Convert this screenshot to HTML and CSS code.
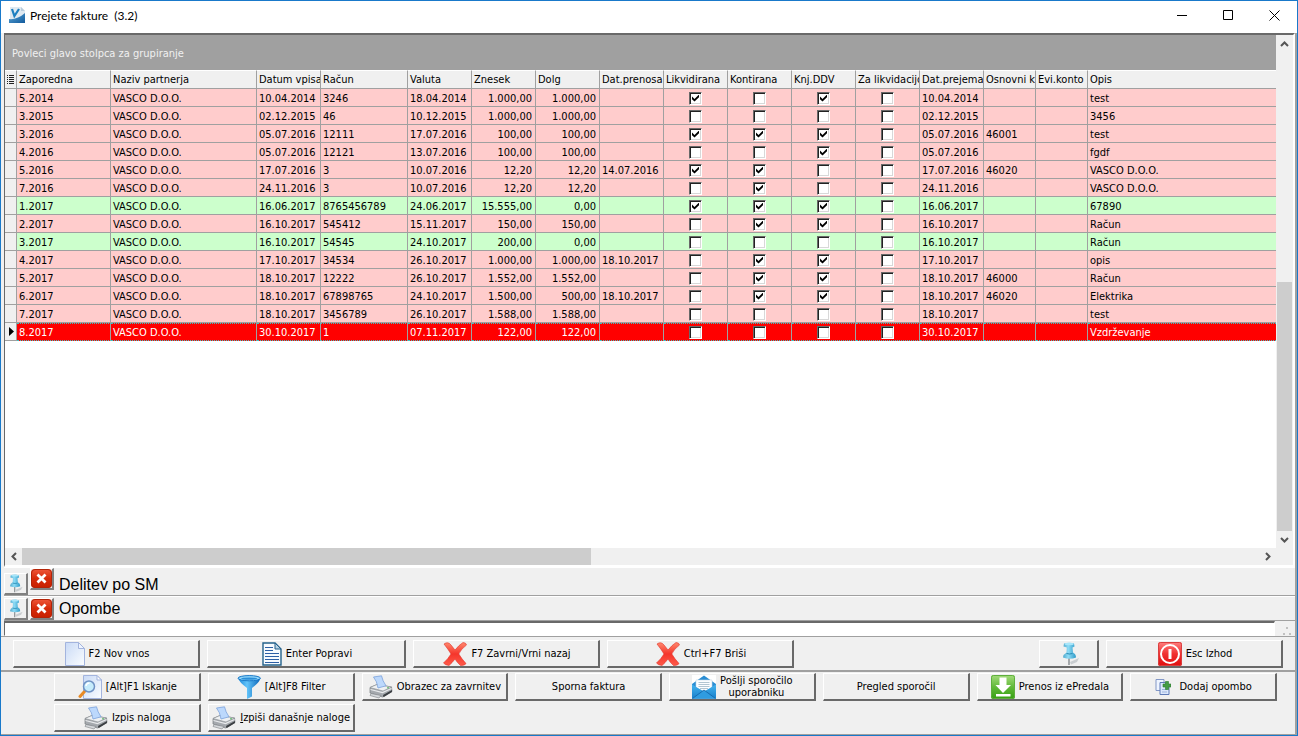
FILE: index.html
```html
<!DOCTYPE html>
<html lang="sl">
<head>
<meta charset="utf-8">
<title>Prejete fakture (3.2)</title>
<link rel="stylesheet" href="styles.css">
</head>
<body>
<svg class="sprite" aria-hidden="true">
  <defs>
    <linearGradient id="g-logo" x1="0" y1="0" x2="1" y2="1"><stop offset="0" stop-color="#5aa6d8"/><stop offset="1" stop-color="#125a9c"/></linearGradient>
    <linearGradient id="g-paper" x1="0" y1="0" x2="1" y2="1"><stop offset="0" stop-color="#c9daf6"/><stop offset="1" stop-color="#fbfdff"/></linearGradient>
    <linearGradient id="g-red" x1="0" y1="0" x2="0" y2="1"><stop offset="0" stop-color="#ff8a70"/><stop offset=".5" stop-color="#f5352b"/><stop offset="1" stop-color="#ff5a4a"/></linearGradient>
    <linearGradient id="g-close" x1="0" y1="0" x2="0" y2="1"><stop offset="0" stop-color="#f0583a"/><stop offset=".5" stop-color="#d62b0a"/><stop offset="1" stop-color="#c82000"/></linearGradient>
    <linearGradient id="g-power" x1="0" y1="0" x2="0" y2="1"><stop offset="0" stop-color="#ff8080"/><stop offset=".5" stop-color="#f03030"/><stop offset="1" stop-color="#e00e0e"/></linearGradient>
    <linearGradient id="g-green" x1="0" y1="0" x2="0" y2="1"><stop offset="0" stop-color="#a4dc7c"/><stop offset=".5" stop-color="#62b93a"/><stop offset="1" stop-color="#35a012"/></linearGradient>
    <linearGradient id="g-funnel" x1="0" y1="0" x2="1" y2="0"><stop offset="0" stop-color="#1b86d8"/><stop offset=".4" stop-color="#62c4fa"/><stop offset="1" stop-color="#0b65b8"/></linearGradient>
    <linearGradient id="g-pin" x1="0" y1="0" x2="1" y2="0"><stop offset="0" stop-color="#4fa8cc"/><stop offset=".4" stop-color="#8fdcf6"/><stop offset="1" stop-color="#2f9bc8"/></linearGradient>
    <linearGradient id="g-mail" x1="0" y1="0" x2="0" y2="1"><stop offset="0" stop-color="#45b4ee"/><stop offset="1" stop-color="#1880cc"/></linearGradient>
  </defs>
  <symbol id="i-logo" viewBox="0 0 16 16">
    <path d="M1 0h11l4 4v12H1z" fill="#dfe9f1"/><path d="M12 0v4h4z" fill="#b8ccdc"/>
    <path d="M0 12q8 1 16-6v10H0z" fill="url(#g-logo)"/>
    <path d="M3 2l2.400 7L10 2" fill="none" stroke="#1d7fc0" stroke-width="2.200"/>
  </symbol>
  <symbol id="i-blank" viewBox="0 0 20 24">
    <path d="M.5.5h13l6 6v17H.5z" fill="url(#g-paper)" stroke="#a3b4de"/><path d="M13.500.5v6h6z" fill="#eef4ff" stroke="#a3b4de"/>
  </symbol>
  <symbol id="i-text" viewBox="0 0 20 24">
    <path d="M1 1h12l6 6v16H1z" fill="#f6fafe" stroke="#23618b" stroke-width="1.400"/><path d="M13 1v6h6z" fill="#b9d3e4" stroke="#23618b"/>
    <path d="M3 5.500h8M3 8.500h8M3 11.500h14M3 14.500h14M3 17.500h14M3 20.500h14" stroke="#2c5fa5"/>
  </symbol>
  <symbol id="i-cross" viewBox="0 0 24 24">
    <path d="M1 2q4-3 7 1l4 5Q16 3 20 .5q3 0 3.500 2.500Q18 7 15.800 12q3 5 7.200 9.500-1 2-5.500 2-3.500-3-5.500-6.500-3 4-6 6.500Q2 23 .5 21 5 17 8 12 5 7 1 2z" fill="url(#g-red)" stroke="#e23328" stroke-width=".6"/>
  </symbol>
  <symbol id="i-search" viewBox="0 0 24 24">
    <path d="M5.500.5H19l4.500 4.500v18.500h-18z" fill="url(#g-paper)" stroke="#a3b4de"/><path d="M19 .5V5h4.500z" fill="#fff" stroke="#a3b4de"/>
    <path d="M6.500 16.500L2 21.500" stroke="#e88a24" stroke-width="3" stroke-linecap="round"/>
    <circle cx="11" cy="11.500" r="5.500" fill="#c6ecfc" stroke="#6f92c4" stroke-width="1.500"/><path d="M8 11q.5-3 3.500-3" fill="none" stroke="#fff" stroke-width="1.500"/>
  </symbol>
  <symbol id="i-funnel" viewBox="0 0 24 24">
    <path d="M1 3q1 4 9 10v11l5-2.500V13q8-6 8.500-10z" fill="url(#g-funnel)"/>
    <ellipse cx="12.200" cy="3.200" rx="11.200" ry="2.600" fill="#90d6fb" stroke="#1676c6"/><ellipse cx="12.200" cy="3.600" rx="8.200" ry="1.200" fill="#2b8fd8"/>
  </symbol>
  <symbol id="i-print" viewBox="0 0 24 24">
    <path d="M1 12.500l7-3 14.500 2.500.5 4.500-9.500 5.500L1 18z" fill="#a5a9ae" stroke="#777b80" stroke-width=".7"/>
    <path d="M1 12.500l7-3 14.500 2.500-8.500 4z" fill="#eef0f2" stroke="#8b9095" stroke-width=".6"/>
    <path d="M4.500 2L12.500.8q1 5 4.500 10l-8 2.200Q8 6 4.500 2z" fill="#bcd8fc" stroke="#7ba2dc" stroke-width=".8"/>
    <path d="M1.500 14.500l12 3 9-4" fill="none" stroke="#e9ebed" stroke-width="1.200"/>
    <path d="M14 20l9-5v2l-8.500 5.200z" fill="#3c4044"/><path d="M2 18.500l10 2-2 2.500-9-2.500z" fill="#d6d9dc" stroke="#7c8085" stroke-width=".6"/><circle cx="19" cy="12.800" r=".8" fill="#3fae46"/>
  </symbol>
  <symbol id="i-mail" viewBox="0 0 24 24">
    <path d="M0 0h24v24H0z" fill="#fff"/><path d="M0 9l12-8.500L24 9v14.500H0z" fill="#2b8ed4"/>
    <path d="M4 5h16v13H4z" fill="#fcfeff" stroke="#c4d8e6" stroke-width=".6"/><path d="M6.500 7.500h11M6.500 9.500h11M6.500 11.500h11M8 13.500h8" stroke="#a9bfcd" stroke-width=".9"/>
    <path d="M0 9.500l12 7 12-7v14H0z" fill="url(#g-mail)"/>
    <path d="M0 23.500L12 15l12 8.500z" fill="#2f9ce0"/><path d="M.5 23.500L12 15l11.500 8.500" fill="none" stroke="#1261a4" stroke-width=".8"/>
  </symbol>
  <symbol id="i-download" viewBox="0 0 24 24">
    <rect width="24" height="24" rx="2" fill="url(#g-green)"/><rect x=".5" y=".5" width="23" height="23" rx="2" fill="none" stroke="#5fae3e"/>
    <path d="M8.500 2.500h7V10H20l-8 8-7.500-8h4z" fill="#fff"/><path d="M5 19h14.500v2.500H5z" fill="#fff"/>
  </symbol>
  <symbol id="i-power" viewBox="0 0 24 24">
    <rect width="24" height="24" rx="2" fill="url(#g-power)"/><rect x=".5" y=".5" width="23" height="23" rx="2" fill="none" stroke="#d94040"/>
    <circle cx="12" cy="12" r="9" fill="none" stroke="#fff" stroke-width="2"/><path d="M12 7v10" stroke="#fff" stroke-width="3"/>
  </symbol>
  <symbol id="i-note" viewBox="0 0 16 16">
    <path d="M1 .5h8v11H1z" fill="#eef4ff" stroke="#8297c6"/><path d="M5 3.500h5l4 3.500v8.500H5z" fill="#dce8fc" stroke="#5f7bb8"/>
    <path d="M7 10.500h5M7 13h5" stroke="#9fb5de"/><path d="M10.500 2.500h3V5H16v3h-2.500v2.500h-3V8H8V5h2.500z" fill="#459c45" stroke="#2b7a30" stroke-width=".6"/>
  </symbol>
  <symbol id="i-pin" viewBox="0 0 20 24">
    <path d="M10 20l9-4-2 4-6 2.500z" fill="#c9cdd0"/><path d="M9 16v7" stroke="#84898d" stroke-width="1.400"/>
    <path d="M4 1.500Q9 0 14 1.500l.5 3-2 1 .5 5q3 1.500 3 5-6 2.500-13 0 .5-3.500 3.500-5l.3-5L3.500 4.500z" fill="url(#g-pin)"/>
    <ellipse cx="9.200" cy="2" rx="4.600" ry="1.200" fill="#a8e6fa"/><path d="M6.500 11.500q3 1 6 0" fill="none" stroke="#278ab4"/>
  </symbol>
  <symbol id="i-close" viewBox="0 0 21 19">
    <rect width="21" height="19" rx="4" fill="url(#g-close)"/><rect x=".5" y=".5" width="20" height="18" rx="3.500" fill="none" stroke="#b22408"/>
    <path d="M6.500 5.500l8 8m0-8l-8 8" stroke="#fff" stroke-width="2.800"/>
  </symbol>
</svg>

<div class="window">
  <header class="titlebar">
    <svg class="logo"><use href="#i-logo"/></svg>
    <h1 class="title">Prejete fakture&nbsp; (3.2)</h1>
    <button class="win-button" aria-label="Minimiraj"><svg viewBox="0 0 11 11"><path d="M0 5.500h10"/></svg></button>
    <button class="win-button" aria-label="Maksimiraj"><svg viewBox="0 0 11 11"><path d="M.5.5h9v9h-9z"/></svg></button>
    <button class="win-button" aria-label="Zapri"><svg viewBox="0 0 11 11"><path d="M.5.5l10 10m0-10l-10 10"/></svg></button>
  </header>

  <main class="content">
    <section class="grid">
      <div class="grid-view">
        <div class="group-box">Povleci glavo stolpca za grupiranje</div>
        <table class="invoices">
          <colgroup>
            <col class="c-mark"><col class="c-no"><col class="c-partner"><col class="c-std"><col class="c-bill">
            <col class="c-std"><col class="c-std"><col class="c-std"><col class="c-std"><col class="c-std"><col class="c-std"><col class="c-std"><col class="c-std"><col class="c-std">
            <col class="c-small"><col class="c-small"><col>
          </colgroup>
          <thead>
            <tr>
              <th aria-label="Stolpci"><svg class="columns-icon" viewBox="0 0 7 9"><path d="M0 .5h1M2 .5h5M0 2.500h1M2 2.500h5M0 4.500h1M2 4.500h5M0 6.500h1M2 6.500h5M0 8.500h1M2 8.500h5"/></svg></th>
              <th>Zaporedna</th><th>Naziv partnerja</th><th>Datum vpisa</th><th>Račun</th><th>Valuta</th><th>Znesek</th><th>Dolg</th><th>Dat.prenosa</th><th>Likvidirana</th><th>Kontirana</th><th>Knj.DDV</th><th>Za likvidacijo</th><th>Dat.prejema</th><th>Osnovni k</th><th>Evi.konto</th><th>Opis</th>
            </tr>
          </thead>
          <tbody id="rows"></tbody>
        </table>
      </div>
      <div class="scroll-v">
        <button class="scroll-button" aria-label="Gor"><svg viewBox="0 0 9 6"><path d="M1 5l3.500-3.500L8 5"/></svg></button>
        <div class="track-v"><div class="thumb-v"></div></div>
        <button class="scroll-button" aria-label="Dol"><svg viewBox="0 0 9 6"><path d="M1 1l3.500 3.500L8 1"/></svg></button>
      </div>
      <div class="scroll-h">
        <button class="scroll-button" aria-label="Levo"><svg class="side" viewBox="0 0 6 9"><path d="M5 1L1.500 4.500 5 8"/></svg></button>
        <div class="track-h"><div class="thumb-h"></div></div>
        <button class="scroll-button" aria-label="Desno"><svg class="side" viewBox="0 0 6 9"><path d="M1 1l3.500 3.500L1 8"/></svg></button>
      </div>
      <div class="scroll-corner"></div>
    </section>

    <section class="panel panel-tall">
      <button class="tool tool-low" aria-label="Pripni"><svg class="pin-small"><use href="#i-pin"/></svg></button>
      <button class="tool tool-high" aria-label="Zapri Delitev po SM"><svg class="close-icon"><use href="#i-close"/></svg></button>
      <h2 class="panel-title">Delitev po SM</h2>
    </section>
    <section class="panel">
      <button class="tool" aria-label="Pripni"><svg class="pin-small"><use href="#i-pin"/></svg></button>
      <button class="tool" aria-label="Zapri Opombe"><svg class="close-icon"><use href="#i-close"/></svg></button>
      <h2 class="panel-title">Opombe</h2>
    </section>
    <div class="note-row">
      <input class="note" type="text" aria-label="Opombe">
      <svg class="grip" viewBox="0 0 9 9"><path d="M4 0h2v2H4zM1 6h2v2H1zM7 6h2v2H7z"/></svg>
    </div>
  </main>

  <nav class="bar bar-main">
    <button class="btn"><svg class="icon-doc"><use href="#i-blank"/></svg>F2 Nov vnos</button>
    <button class="btn btn-wide"><svg class="icon-doc"><use href="#i-text"/></svg>Enter Popravi</button>
    <button class="btn"><svg class="icon"><use href="#i-cross"/></svg>F7 Zavrni/Vrni nazaj</button>
    <button class="btn"><svg class="icon"><use href="#i-cross"/></svg>Ctrl+F7 Briši</button>
    <button class="btn btn-pin" aria-label="Pripni"><svg class="icon-doc"><use href="#i-pin"/></svg></button>
    <button class="btn btn-exit"><svg class="icon"><use href="#i-power"/></svg>Esc Izhod</button>
  </nav>
  <nav class="bar bar-extra">
    <button class="btn"><svg class="icon"><use href="#i-search"/></svg>[Alt]F1 Iskanje</button>
    <button class="btn"><svg class="icon"><use href="#i-funnel"/></svg>[Alt]F8 Filter</button>
    <button class="btn"><svg class="icon"><use href="#i-print"/></svg>Obrazec za zavrnitev</button>
    <button class="btn">Sporna faktura</button>
    <button class="btn"><svg class="icon"><use href="#i-mail"/></svg><span>Pošlji sporočilo<br>uporabniku</span></button>
    <button class="btn">Pregled sporočil</button>
    <button class="btn"><svg class="icon"><use href="#i-download"/></svg>Prenos iz ePredala</button>
    <button class="btn btn-spaced"><svg class="icon-small"><use href="#i-note"/></svg>Dodaj opombo</button>
    <button class="btn"><svg class="icon"><use href="#i-print"/></svg>Izpis naloga</button>
    <button class="btn"><svg class="icon"><use href="#i-print"/></svg><span><u>I</u>zpiši današnje naloge</span></button>
  </nav>
</div>
<script src="rows.js"></script>
</body>
</html>
```
FILE: rows.js
```js
// number, entered, bill, due, amount, debt, transferred, flags, received, account, description, state
const invoices = [
  ["5.2014", "10.04.2014", "3246", "18.04.2014", "1.000,00", "1.000,00", "", "1010", "10.04.2014", "", "test", ""],
  ["3.2015", "02.12.2015", "46", "10.12.2015", "1.000,00", "1.000,00", "", "0000", "02.12.2015", "", "3456", ""],
  ["3.2016", "05.07.2016", "12111", "17.07.2016", "100,00", "100,00", "", "1110", "05.07.2016", "46001", "test", ""],
  ["4.2016", "05.07.2016", "12121", "13.07.2016", "100,00", "100,00", "", "0010", "05.07.2016", "", "fgdf", ""],
  ["5.2016", "17.07.2016", "3", "10.07.2016", "12,20", "12,20", "14.07.2016", "1100", "17.07.2016", "46020", "VASCO D.O.O.", ""],
  ["7.2016", "24.11.2016", "3", "10.07.2016", "12,20", "12,20", "", "0100", "24.11.2016", "", "VASCO D.O.O.", ""],
  ["1.2017", "16.06.2017", "8765456789", "24.06.2017", "15.555,00", "0,00", "", "1110", "16.06.2017", "", "67890", "paid"],
  ["2.2017", "16.10.2017", "545412", "15.11.2017", "150,00", "150,00", "", "0110", "16.10.2017", "", "Račun", ""],
  ["3.2017", "16.10.2017", "54545", "24.10.2017", "200,00", "0,00", "", "0000", "16.10.2017", "", "Račun", "paid"],
  ["4.2017", "17.10.2017", "34534", "26.10.2017", "1.000,00", "1.000,00", "18.10.2017", "0110", "17.10.2017", "", "opis", ""],
  ["5.2017", "18.10.2017", "12222", "26.10.2017", "1.552,00", "1.552,00", "", "0110", "18.10.2017", "46000", "Račun", ""],
  ["6.2017", "18.10.2017", "67898765", "24.10.2017", "1.500,00", "500,00", "18.10.2017", "0110", "18.10.2017", "46020", "Elektrika", ""],
  ["7.2017", "18.10.2017", "3456789", "26.10.2017", "1.588,00", "1.588,00", "", "0000", "18.10.2017", "", "test", ""],
  ["8.2017", "30.10.2017", "1", "07.11.2017", "122,00", "122,00", "", "0000", "30.10.2017", "", "Vzdrževanje", "selected"]
];
const flagNames = ["Likvidirana", "Kontirana", "Knj.DDV", "Za likvidacijo"];

const cell = (text, cls) => `<td${cls ? ` class="${cls}"` : ""}>${text}</td>`;

document.getElementById("rows").innerHTML = invoices.map(
  ([no, entered, bill, due, amount, debt, moved, flags, received, account, text, state]) => {
    const checks = [...flags].map((f, i) =>
      cell(`<input type="checkbox" class="check" aria-label="${flagNames[i]} ${no}"${f === "1" ? " checked" : ""}>`, "flag"));
    const marker = state === "selected" ? '<span class="marker"></span>' : "";
    return `<tr class="${state}">` + [
      cell(marker, "mark"), cell(no), cell("VASCO D.O.O."), cell(entered), cell(bill), cell(due),
      cell(amount, "num"), cell(debt, "num"), cell(moved), ...checks,
      cell(received), cell(account), cell(""), cell(text)
    ].join("") + "</tr>";
  }).join("");
```
FILE: styles.css
```css
* { box-sizing: border-box; }

body {
  margin: 0;
  background: #f0f0f0;
  color: #000;
  font-family: "DejaVu Sans Condensed", "Noto Sans", sans-serif;
  font-size: 11px;
  line-height: 13px;
}

button { font: inherit; color: inherit; margin: 0; padding: 0; border: 0; background: none; }
svg { display: block; flex: none; }
.sprite { position: absolute; width: 0; height: 0; }

.window {
  display: flex;
  flex-direction: column;
  min-height: 100vh;
  border: 1px solid #1979ca;
}

/* Title bar */
.titlebar {
  display: flex;
  align-items: center;
  height: 32px;
  padding-left: 8px;
  padding-bottom: 4px;
  background: #fff;
}
.logo { width: 16px; height: 16px; }
.title {
  flex: 1;
  margin: 0 0 0 5px;
  padding-top: 2px;
  font: 12px/16px Lato, "Open Sans", sans-serif;
}
.win-button {
  display: flex;
  align-items: center;
  justify-content: center;
  width: 46px;
  height: 28px;
}
.win-button svg { width: 11px; height: 11px; }
.win-button path { fill: none; stroke: #000; }

/* Grid */
.content {
  flex: 1;
  display: flex;
  flex-direction: column;
  padding-left: 3px;
  border-right: 2px solid #a0a0a0;
}
.grid {
  flex: 1;
  display: grid;
  grid-template-columns: 1fr 17px;
  grid-template-rows: 1fr 17px;
  border: 2px solid #696969;
  border-left-width: 1px;
  border-right: 2px solid #fff;
  border-bottom: 2px solid #fff;
}
.grid-view { background: #fff; overflow: hidden; }
.group-box {
  height: 35px;
  padding: 12px 7px;
  background: #a0a0a0;
  color: #f0f0f0;
}
.invoices {
  width: 100%;
  table-layout: fixed;
  border-collapse: separate;
  border-spacing: 0;
}
.c-mark { width: 12px; }
.c-no { width: 94px; }
.c-partner { width: 146px; }
.c-std { width: 64px; }
.c-bill { width: 87px; }
.c-small { width: 52px; }
.invoices th {
  height: 19px;
  padding: 0 0 0 2px;
  border-right: 1px solid #a0a0a0;
  border-bottom: 1px solid #a0a0a0;
  border-top: 1px solid #fff;
  background: #f0f0f0;
  font-weight: normal;
  text-align: left;
  white-space: nowrap;
  overflow: hidden;
}
.invoices td {
  height: 18px;
  padding: 2px 2px 0;
  border-right: 1px solid #a0a0a0;
  border-bottom: 1px solid #a0a0a0;
  background: #ffcccc;
  white-space: nowrap;
  overflow: hidden;
}
.invoices th:last-child, .invoices td:last-child { border-right: 0; }
.invoices .paid td { background: #ccffcc; }
.invoices .selected td {
  padding-top: 1px;
  background: #f00;
  color: #fff;
  border-top: 1px dotted #40c0c0;
  border-bottom: 1px dotted #40c0c0;
}
.invoices td.mark, .invoices .paid td.mark, .invoices .selected td.mark {
  padding: 0 0 0 4px;
  background: #f0f0f0;
  border-top: 0;
  border-bottom: 1px solid #a0a0a0;
}
.invoices td.num { padding-right: 3px; text-align: right; }
.invoices td.flag { padding: 1px 0 0; }
.invoices .selected td.flag { padding: 0; }
.columns-icon { width: 7px; height: 9px; }
.columns-icon path { stroke: #222; fill: none; }
.marker {
  display: block;
  width: 5px;
  height: 9px;
  background: #000;
  clip-path: polygon(0 0, 100% 50%, 0 100%);
}
.check {
  appearance: none;
  display: block;
  width: 13px;
  height: 13px;
  margin: 0 auto;
  border: 1px solid #fff;
  border-top-color: #696969;
  border-left-color: #696969;
  background: #fff;
  box-shadow: inset 1px 1px #222, inset -1px -1px #d8d8d8;
}
.check:checked::before {
  content: "";
  display: block;
  width: 7px;
  height: 7px;
  margin: 2px;
  background: #000;
  clip-path: polygon(0 29%, 36% 64%, 100% 0, 100% 40%, 36% 100%, 0 68%);
}

/* Scroll bars */
.scroll-v { display: flex; flex-direction: column; background: #f0f0f0; }
.scroll-h { display: flex; background: #f0f0f0; }
.scroll-corner { background: #f0f0f0; }
.scroll-button {
  display: flex;
  flex: none;
  align-items: center;
  justify-content: center;
  width: 17px;
  height: 17px;
}
.scroll-button svg { width: 9px; height: 6px; }
.scroll-button .side { width: 6px; height: 9px; }
.scroll-button path { fill: none; stroke: #555; stroke-width: 2; }
.track-v { flex: 1; display: flex; flex-direction: column; justify-content: flex-end; }
.thumb-v { height: 52%; margin: 0 1px; background: #cdcdcd; }
.track-h { flex: 1; display: flex; }
.thumb-h { width: 46%; background: #cdcdcd; }

/* Docked panels */
.panel {
  display: flex;
  align-items: center;
  gap: 2px;
  height: 24px;
  border-top: 1px solid #fff;
}
.panel-tall { height: 29px; border-bottom: 1px solid #a0a0a0; }
.tool {
  display: flex;
  align-items: center;
  justify-content: center;
  width: 24px;
  height: 22px;
  border: 1px solid #fff;
  border-right: 2px solid #808080;
  border-bottom: 2px solid #808080;
}
.tool-low { align-self: flex-end; }
.tool-high { align-self: flex-start; }
.pin-small { width: 17px; height: 19px; }
.close-icon { width: 21px; height: 19px; }
.panel-title {
  margin: 0 0 0 3px;
  padding-top: 1px;
  font: 16px/20px "Liberation Sans", sans-serif;
}
.panel-tall .panel-title { align-self: flex-end; }
.note-row {
  display: flex;
  align-items: flex-end;
  justify-content: space-between;
  height: 16px;
  border-top: 1px solid #a0a0a0;
}
.note {
  flex: 1;
  height: 15px;
  margin-right: 7px;
  padding: 0 3px;
  border: 1px solid #fff;
  border-top: 2px solid #696969;
  border-left: 1px solid #696969;
  border-radius: 0;
  background: #fff;
  font: inherit;
}
.grip { width: 9px; height: 9px; margin-right: 4px; fill: #c0c0c0; }

/* Button bars */
.bar { border-right: 2px solid #a0a0a0; }
.bar-main {
  display: flex;
  gap: 7px;
  padding: 3px 12px 2px;
  border-top: 1px solid #a0a0a0;
  border-bottom: 2px solid #a0a0a0;
}
.bar-extra {
  display: grid;
  grid-template-columns: repeat(8, 1fr);
  gap: 3px 7px;
  padding: 1px 18px 2px 53px;
  border-bottom: 1px solid #a0a0a0;
}
.btn {
  display: flex;
  align-items: center;
  justify-content: center;
  gap: 4px;
  height: 28px;
  padding-left: 1px;
  border: 1px solid #fff;
  border-right: 2px solid #696969;
  border-bottom: 2px solid #696969;
  white-space: nowrap;
  line-height: 12px;
}
.bar-main .btn { flex: 0 1 187px; padding-left: 2px; }
.bar-main .btn-wide { flex-basis: 199px; }
.bar-main .btn-pin { flex-basis: 60px; margin-left: auto; }
.bar-main .btn-exit { flex-basis: 177px; }
.bar .btn-spaced { gap: 8px; }
.icon { width: 24px; height: 24px; }
.icon-doc { width: 20px; height: 24px; }
.icon-small { width: 16px; height: 16px; }
```
